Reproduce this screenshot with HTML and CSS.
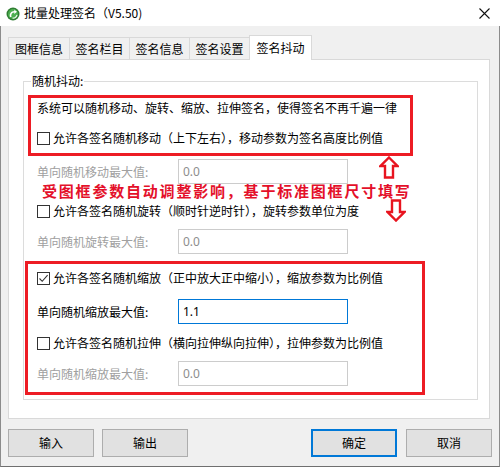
FILE: index.html
```html
<!DOCTYPE html>
<html lang="zh-CN">
<head>
<meta charset="utf-8">
<title>批量处理签名</title>
<link rel="stylesheet" href="styles.css">
</head>
<body>
<div class="window">
  <div class="titlebar">
    <svg class="app-icon" width="14" height="14" viewBox="0 0 14 14">
      <circle cx="7" cy="7" r="6.5" fill="#2f7d32"/>
      <circle cx="7" cy="7" r="5" fill="#4caf50"/>
      <path d="M4 10 C3 7 5 4 8.5 4 L8 2.5 L11 4.8 L8.2 7 L8.4 5.6 C6 5.6 4.8 7.5 5.5 10 Z" fill="#fff"/>
      <path d="M6.5 11 C8.5 11.5 10.5 10 11 8" stroke="#e8f5e9" stroke-width="1.2" fill="none"/>
    </svg>
    <span class="title">批量处理签名（V5.50)</span>
    <svg class="close" width="11" height="11" viewBox="0 0 11 11">
      <path d="M0.5 0.5 L10.5 10.5 M10.5 0.5 L0.5 10.5" stroke="#111" stroke-width="1.1"/>
    </svg>
  </div>
  <div class="client">
    <div class="tabs">
      <div class="tab">图框信息</div>
      <div class="tab">签名栏目</div>
      <div class="tab">签名信息</div>
      <div class="tab last">签名设置</div>
      <div class="tab active">签名抖动</div>
    </div>
    <div class="panel">
      <div class="group">
        <span class="legend">随机抖动:</span>
        <div class="redbox box1">
          <div class="row">系统可以随机移动、旋转、缩放、拉伸签名，使得签名不再千遍一律</div>
          <div class="row check gap10"><span class="cb"></span>允许各签名随机移动（上下左右），移动参数为签名高度比例值</div>
        </div>
        <div class="field disabled f1">
          <span class="flabel">单向随机移动最大值:</span>
          <span class="input">0.0</span>
        </div>
        <div class="note">受图框参数自动调整影响，基于标准图框尺寸填写</div>
        <div class="row check indent r-rot"><span class="cb"></span>允许各签名随机旋转（顺时针逆时针），旋转参数单位为度</div>
        <div class="field disabled f2">
          <span class="flabel">单向随机旋转最大值:</span>
          <span class="input">0.0</span>
        </div>
        <div class="redbox box2">
          <div class="row check"><span class="cb checked"><svg width="11" height="11" viewBox="0 0 11 11"><path d="M1.5 5.5 L4.2 8.3 L9.6 2.2" stroke="#333" stroke-width="1.1" fill="none"/></svg></span>允许各签名随机缩放（正中放大正中缩小），缩放参数为比例值</div>
          <div class="field b2f1">
            <span class="flabel">单向随机缩放最大值:</span>
            <span class="input focus">1.1</span>
          </div>
          <div class="row check b2c2"><span class="cb"></span>允许各签名随机拉伸（横向拉伸纵向拉伸），拉伸参数为比例值</div>
          <div class="field disabled b2f2">
            <span class="flabel">单向随机缩放最大值:</span>
            <span class="input">0.0</span>
          </div>
        </div>
        <svg class="arrow up" width="20" height="23" viewBox="0 0 20 23">
          <polygon points="10,1.5 18.5,10 14,10 14,21.5 6,21.5 6,10 1.5,10" fill="#fff" stroke="#e8141f" stroke-width="2.4" stroke-linejoin="miter"/>
        </svg>
        <svg class="arrow down" width="20" height="23" viewBox="0 0 20 23">
          <polygon points="6,1.5 14,1.5 14,13 18.5,13 10,21.5 1.5,13 6,13" fill="#fff" stroke="#e8141f" stroke-width="2.4" stroke-linejoin="miter"/>
        </svg>
      </div>
    </div>
    <div class="buttons">
      <div class="btn-group">
        <div class="btn">输入</div>
        <div class="btn">输出</div>
      </div>
      <div class="btn-group">
        <div class="btn default">确定</div>
        <div class="btn">取消</div>
      </div>
    </div>
  </div>
</div>
</body>
</html>
```

FILE: styles.css
```css
* { box-sizing: border-box; }
html, body { margin: 0; padding: 0; background: #fff; }
body {
  font-family: "Noto Sans CJK SC", "Microsoft YaHei", sans-serif;
  font-size: 12px;
  color: #000;
}
.window { width: 500px; height: 468px; }
.titlebar {
  height: 26px;
  background: #fff;
  display: flex;
  align-items: center;
  position: relative;
}
.app-icon { margin-left: 6px; margin-top: 1px; }
.title { margin-left: 4px; font-size: 12px; line-height: 16px; }
.close { margin-left: auto; margin-right: 10px; margin-top: 0; }
.client {
  height: 441px;
  background: #f0f0f0;
  border-left: 1px solid #8c8c8c;
  border-right: 1px solid #8c8c8c;
  border-bottom: 1px solid #6f6f6f;
  padding: 9px 7px 0 7px;
}
.tabs {
  display: flex;
  align-items: flex-end;
  height: 24px;
  position: relative;
  z-index: 2;
}
.tab {
  height: 22px;
  border: 1px solid #d9d9d9;
  border-bottom: none;
  border-right: none;
  width: 60px;
  text-align: center;
  line-height: 21px;
  background: #f0f0f0;
}
.tab:first-child { width: 61px; }
.tab.last { border-right: 1px solid #d9d9d9; width: 61px; }
.tab.active {
  height: 25px;
  width: 63px;
  margin-left: -1px;
  margin-bottom: -1px;
  background: #fff;
  border-right: 1px solid #d9d9d9;
  line-height: 23px;
}
.panel {
  width: 482px;
  height: 360px;
  background: #fff;
  border: 1px solid #d9d9d9;
  padding-top: 21px;
  position: relative;
  z-index: 1;
}
.group {
  position: relative;
  margin: 0 11px 0 14px;
  border: 1px solid #dcdcdc;
  padding: 13px 0 4px 0;
}
.legend {
  position: absolute;
  top: -9px;
  left: 7px;
  line-height: 16px;
  padding: 0 1px;
  background: #fff;
}
.redbox { border: 3px solid #ed1c24; }
.box1 {
  margin-left: 4px;
  width: 385px;
  height: 61px;
  padding: 0 0 0 6px;
}
.row {
  height: 20px;
  line-height: 20px;
  display: flex;
  align-items: center;
  white-space: nowrap;
}
.gap10 { margin-top: 10px; }
.cb {
  width: 13px;
  height: 13px;
  border: 1px solid #333;
  background: #fff;
  margin-right: 3px;
  flex: none;
  display: flex;
  align-items: center;
  justify-content: center;
}
.field {
  display: flex;
  align-items: center;
  height: 25px;
}
.group > .field, .indent { padding-left: 13px; }
.flabel { width: 141px; flex: none; }
.input {
  width: 170px;
  height: 25px;
  border: 1px solid #cccccc;
  background: #fff;
  padding-left: 4px;
  line-height: 23px;
  font-family: "Segoe UI", "Noto Sans", "Liberation Sans", sans-serif;
  font-size: 12px;
}
.input.focus { border-color: #0078d7; color: #000; }
.disabled { color: #a0a0a0; }
.disabled .input { color: #8d8d8d; }
.f1 { margin-top: 3px; }
.note {
  margin-top: -2px;
  height: 18px;
  line-height: 18px;
  padding-left: 18px;
  color: #e4102a;
  font-weight: 700;
  font-size: 15px;
  letter-spacing: 1.8px;
  white-space: nowrap;
}
.r-rot { margin-top: 1px; }
.f2 { margin-top: 8px; }
.box2 {
  margin: 7px 0 0 1px;
  width: 400px;
  height: 134px;
  padding: 4px 0 0 9px;
}
.b2f1 { margin-top: 11px; }
.b2c2 { margin-top: 9px; }
.b2f2 { margin-top: 8px; }
.arrow { position: absolute; }
.arrow.up { left: 355px; top: 74px; }
.arrow.down { left: 362px; top: 117px; }
.buttons {
  display: flex;
  justify-content: space-between;
  margin-top: 10px;
}
.btn-group { display: flex; gap: 8px; }
.btn-group + .btn-group { gap: 9px; }
.btn {
  width: 86px;
  height: 28px;
  background: #e1e1e1;
  border: 1px solid #adadad;
  text-align: center;
  line-height: 26px;
}
.btn.default { border: 2px solid #0078d7; line-height: 24px; }
```
